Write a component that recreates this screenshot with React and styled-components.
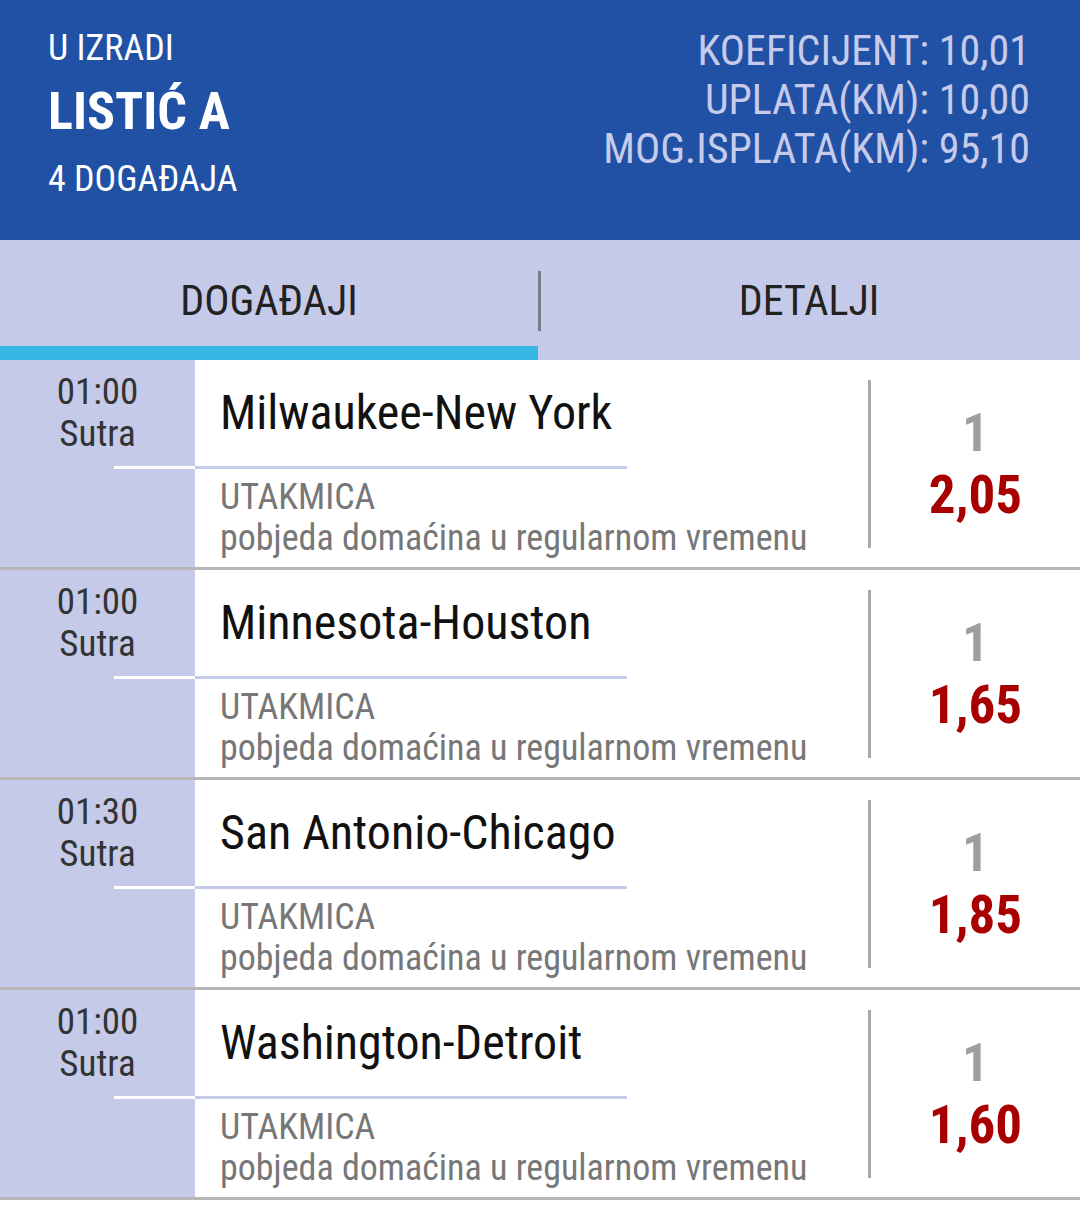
import styled, { createGlobalStyle } from "styled-components";

const GlobalStyle = createGlobalStyle`
  html, body {
    margin: 0;
    padding: 0;
    background: #ffffff;
  }
  body {
    font-family: "Roboto Condensed", "Liberation Sans Narrow", "Roboto", sans-serif;
  }
`;

const Page = styled.div`
  width: 1080px;
  background: #ffffff;
`;

/* header */
const Header = styled.header`
  height: 240px;
  box-sizing: border-box;
  background: #2151a4;
  padding: 28px 50px 0 48px;
  display: flex;
  justify-content: space-between;
  align-items: flex-start;
`;

const SlipInfo = styled.div`
  display: flex;
  flex-direction: column;
  color: #ffffff;
`;

const Status = styled.div`
  font-size: 36px;
  line-height: 40px;
`;

const SlipTitle = styled.div`
  font-size: 52px;
  line-height: 60px;
  font-weight: 700;
  margin-top: 14px;
`;

const EventCount = styled.div`
  font-size: 36px;
  line-height: 44px;
  margin-top: 15px;
`;

const Totals = styled.div`
  display: flex;
  flex-direction: column;
  align-items: flex-end;
  margin-top: -2px;
  color: #c6cbeb;
  font-size: 42px;
  line-height: 49px;
`;

/* tabs */
const Tabs = styled.nav`
  display: grid;
  grid-template-columns: 538px 1fr;
  height: 120px;
  background: #c5cae8;
`;

const Tab = styled.div`
  position: relative;
  box-sizing: border-box;
  padding-top: 37px;
  text-align: center;
  font-size: 42px;
  line-height: 48px;
  color: #222222;
  border-bottom: 14px solid ${({ $active }) => ($active ? "#37b6e4" : "transparent")};

  ${({ $divider }) =>
    $divider &&
    `
    &::before {
      content: "";
      position: absolute;
      left: 0;
      top: 31px;
      width: 3px;
      height: 60px;
      background: #7a7c86;
    }
  `}
`;

/* event rows */
const Row = styled.div`
  display: flex;
  height: 210px;
  box-sizing: border-box;
  border-bottom: 3px solid #b6b6b6;
`;

const TimeCell = styled.div`
  width: 195px;
  flex-shrink: 0;
  background: #c5cae8;
  display: flex;
  flex-direction: column;
`;

const TimeText = styled.div`
  height: 106px;
  box-sizing: border-box;
  padding-top: 11px;
  text-align: center;
  color: #333333;
  font-size: 37px;
  line-height: 42px;
`;

const TimeRule = styled.div`
  height: 3px;
  margin-left: 114px;
  background: #ffffff;
`;

const EventCell = styled.div`
  flex: 1;
  display: flex;
  flex-direction: column;
`;

const MatchName = styled.div`
  width: 432px;
  height: 109px;
  box-sizing: border-box;
  padding-left: 25px;
  display: flex;
  align-items: center;
  border-bottom: 3px solid #c5cae8;
  font-size: 48px;
  line-height: 48px;
  color: #111111;
  white-space: nowrap;
`;

const BetInfo = styled.div`
  padding: 8px 0 0 25px;
  color: #777777;
  font-size: 36px;
  line-height: 41px;
  white-space: nowrap;
`;

const OddsCell = styled.div`
  width: 209px;
  flex-shrink: 0;
  margin: 20px 0 19px;
  border-left: 3px solid #a9a9a9;
  display: flex;
  flex-direction: column;
  align-items: center;
  justify-content: center;
  font-size: 53px;
  line-height: 62px;
  font-weight: 700;
`;

const Tip = styled.div`
  color: #9e9e9e;
`;

const Odd = styled.div`
  color: #a80000;
`;

const events = [
  { time: "01:00", match: "Milwaukee-New York", odd: "2,05" },
  { time: "01:00", match: "Minnesota-Houston", odd: "1,65" },
  { time: "01:30", match: "San Antonio-Chicago", odd: "1,85" },
  { time: "01:00", match: "Washington-Detroit", odd: "1,60" },
];

const App = () => {
  return (
    <Page>
      <GlobalStyle />
      <Header>
        <SlipInfo>
          <Status>U IZRADI</Status>
          <SlipTitle>LISTIĆ A</SlipTitle>
          <EventCount>4 DOGAĐAJA</EventCount>
        </SlipInfo>
        <Totals>
          <div>KOEFICIJENT: 10,01</div>
          <div>UPLATA(KM): 10,00</div>
          <div>MOG.ISPLATA(KM): 95,10</div>
        </Totals>
      </Header>

      <Tabs>
        <Tab $active>DOGAĐAJI</Tab>
        <Tab $divider>DETALJI</Tab>
      </Tabs>

      {events.map((ev, i) => (
        <Row key={i}>
          <TimeCell>
            <TimeText>
              {ev.time}
              <br />
              Sutra
            </TimeText>
            <TimeRule />
          </TimeCell>
          <EventCell>
            <MatchName>{ev.match}</MatchName>
            <BetInfo>
              UTAKMICA
              <br />
              pobjeda domaćina u regularnom vremenu
            </BetInfo>
          </EventCell>
          <OddsCell>
            <Tip>1</Tip>
            <Odd>{ev.odd}</Odd>
          </OddsCell>
        </Row>
      ))}
    </Page>
  );
};

export default App;
